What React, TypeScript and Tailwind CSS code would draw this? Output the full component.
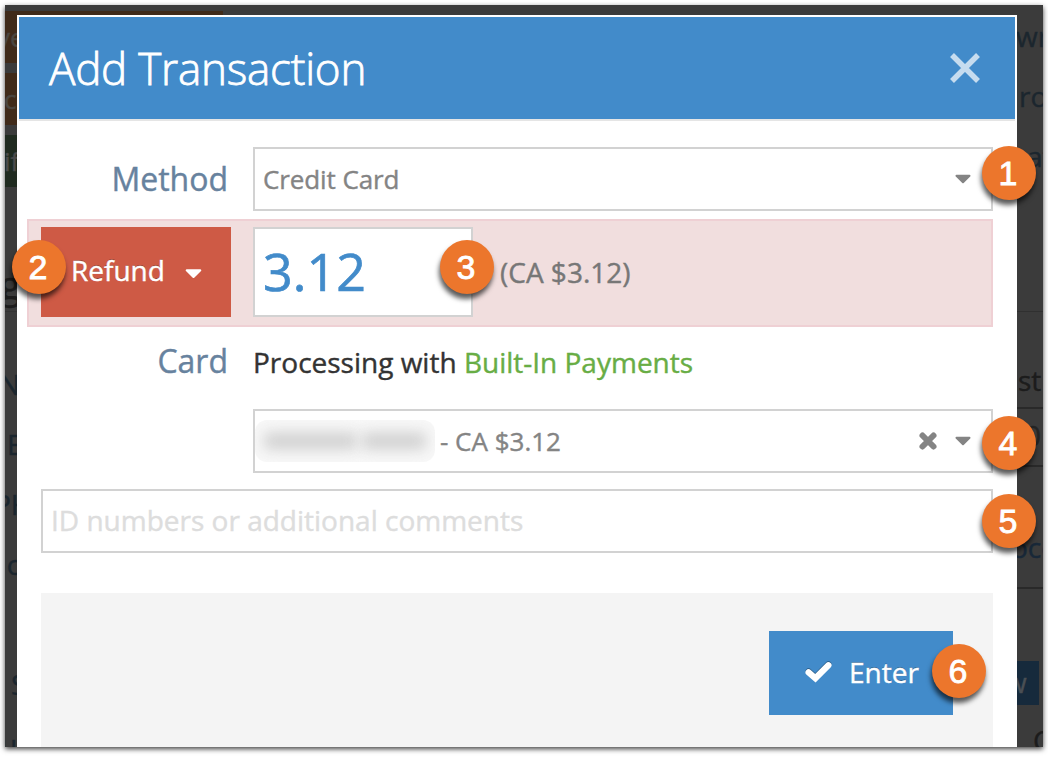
import React from 'react';
import { FaCaretDown } from 'react-icons/fa';

interface StepBadgeProps {
  step: number;
  className: string;
}

// Numbered callout pinned over the control it describes
function StepBadge({ step, className }: StepBadgeProps) {
  return (
    <span
      className={`absolute z-10 flex size-[54px] items-center justify-center rounded-full bg-[#ec762c] pr-[2px] pb-px font-['Liberation_Sans',sans-serif] text-[34px] leading-none text-white shadow-[-1px_5px_5px_rgba(0,0,0,0.65)] [-webkit-text-stroke:0.8px_white] [text-shadow:none] ${className}`}
    >
      {step}
    </span>
  );
}

function PageBehind() {
  return (
    <div className="flex justify-between overflow-hidden bg-[#3b3b3b] text-[28px] leading-[52px] whitespace-nowrap text-[#1b262e] [grid-area:1/1]">
      <div className="flex h-[742px] w-[218px] flex-col overflow-hidden pt-[6px]">
        <div className="h-[52px] shrink-0 bg-[#402b1a] text-[26px] text-[#4b4640]"><span className="-ml-[8px]">ve</span></div>
        <div className="mt-[10px] h-[52px] shrink-0 bg-[#402b1a] text-[26px] text-[#4b4640]"><span className="-ml-[1px]">ch</span></div>
        <div className="mt-[10px] h-[52px] shrink-0 bg-[#202b20] text-[26px] text-[#4b4b4b]"><span className="-ml-[1px]">if</span></div>
        <div className="mt-[73px] h-[52px] shrink-0 border-b border-[#333333] text-[38px] leading-[48px] text-[#1c1c1c]"><span className="-ml-[5px]">g</span></div>
        <div className="mt-[46px] h-[60px] shrink-0"><span className="-ml-[6px]">N</span></div>
        <div className="h-[60px] shrink-0"><span className="ml-[2px]">E</span></div>
        <div className="h-[60px] shrink-0"><span className="-ml-[11px]">PH</span></div>
        <div className="h-[120px] shrink-0"><span className="-ml-[6px]">Ic</span></div>
        <div className="h-[60px] shrink-0"><span className="ml-[6px]">S</span></div>
        <div className="h-[60px] shrink-0"><span className="-ml-[5px]">u</span></div>
      </div>
      <div className="flex h-[742px] w-[26px] flex-col overflow-hidden pt-[5px]">
        <div className="h-[60px] shrink-0"><span className="-ml-[1px]">wn</span></div>
        <div className="h-[60px] shrink-0"><span className="ml-[2px]">ro</span></div>
        <div className="h-[182px] shrink-0 border-b border-[#303030]"><span className="ml-[10px]">at</span></div>
        <div className="h-[97px] shrink-0 border-b-2 border-[#292929] pt-[42px] text-[#1c1c1c]"><span className="ml-[1px]">st</span></div>
        <div className="h-[58px] shrink-0 border-b-2 border-[#292929] text-[#242424]"><span className="ml-[8px]">0</span></div>
        <div className="h-[122px] shrink-0 border-b-2 border-[#292929] pt-[54px] text-[#182838]"><span className="-ml-[6px]">oce</span></div>
        <div className="mt-[72px] h-[44px] w-[22px] shrink-0 bg-[#162a3c] leading-[42px] text-[#4a4f54]"><span className="-ml-[12px]">w</span></div>
        <div className="mt-[16px] flex h-[26px] shrink-0 overflow-hidden leading-[38px] text-[#1c1c1c]">
          <div className="w-[2px] bg-[#162a3c]" />
          <span className="ml-[16px]">C</span>
        </div>
      </div>
    </div>
  );
}

export default function App() {
  return (
    <div className="h-[757px] w-[1048px] overflow-hidden bg-white p-[5px] font-['Open_Sans',sans-serif] [-webkit-text-stroke:0.4px_currentColor]">
      <div className="grid h-[742px] w-[1038px] grid-cols-1 shadow-[0_2px_5px_rgba(0,0,0,0.75)]">
        <PageBehind />

        <div className="z-10 mt-[10px] ml-[12px] h-[732px] w-[1000px] bg-white [grid-area:1/1]">
          <div className="px-[2px] pt-[2px]">
            <div className="flex h-[104px] items-center justify-between border-b-2 border-[#e5e5e5] bg-[#428bca] pr-[34px] pl-[30px]">
              <h1 className="text-[44px] leading-none font-light tracking-[-0.25px] text-white [-webkit-text-stroke:0.8px_white]">Add Transaction</h1>
              <button aria-label="Close" className="text-[#c6dcef]">
                <svg className="size-[32px]" viewBox="0 0 32 32" stroke="currentColor" strokeWidth="5.5">
                  <path d="M3 3 29 29M29 3 3 29" />
                </svg>
              </button>
            </div>
          </div>

          <div className="mt-[26px] flex h-[64px] items-center pl-[24px]">
            <label className="w-[187px] text-right text-[32px] leading-none text-[#67829e]">Method</label>
            <div className="relative ml-[25px] flex h-[64px] w-[740px] items-center justify-between border-2 border-[#d2d2d2] pr-[15px] pl-[8px] text-[26px] tracking-[-0.1px] text-[#848484]">
              Credit Card
              <FaCaretDown className="mb-[2px] size-[26px]" />
              <StepBadge step={1} className="-top-[3px] -right-[45px]" />
            </div>
          </div>

          <div className="mt-[8px] ml-[10px] flex h-[108px] w-[966px] items-start border-2 border-[#efd0d4] bg-[#f1dede] pt-[6px] pl-[12px]">
            <button className="relative flex h-[90px] w-[190px] items-center bg-[#ce5a45] pb-[4px] pl-[30px] text-[28px] text-white [text-shadow:0_-1px_0_rgba(0,0,0,0.3)]">
              Refund
              <FaCaretDown className="mt-[5px] ml-[15px] size-[27px]" />
              <StepBadge step={2} className="top-[13px] -left-[29px]" />
            </button>
            <div className="relative ml-[22px] flex h-[90px] w-[220px] items-center border-2 border-[#d2d2d2] bg-white pb-[2px] pl-[8px] text-[52px] text-[#428bca] [-webkit-text-stroke:0.7px_#428bca]">
              3.12
              <StepBadge step={3} className="top-[11px] -right-[23px]" />
            </div>
            <span className="ml-[27px] text-[28px] leading-[90px] text-[#777777]">(CA $3.12)</span>
          </div>

          <div className="mt-[8px] flex h-[74px] pl-[24px]">
            <label className="w-[187px] pt-[10px] text-right text-[32px] leading-none text-[#67829e]">Card</label>
            <p className="ml-[25px] pt-[8px] text-[28px] leading-[38px] text-[#333333]">
              Processing with <span className="text-[#68ad45]">Built-In Payments</span>
            </p>
          </div>

          <div className="relative ml-[236px] flex h-[64px] w-[740px] items-center border-2 border-[#d2d2d2] pr-[15px] text-[26px] text-[#848484]">
            <div className="flex h-[42px] w-[180px] items-center gap-[5px] overflow-hidden rounded-[12px] bg-[#f8f8f8] px-[9px]">
              <div className="h-[18px] w-[94px] rounded bg-[#d2d2d2] blur-[7px]" />
              <div className="h-[18px] w-[64px] rounded bg-[#d2d2d2] blur-[7px]" />
            </div>
            <span className="ml-[5px] grow">- CA $3.12</span>
            <svg className="size-[20px]" viewBox="0 0 20 20" stroke="currentColor" strokeWidth="6" strokeLinecap="round">
              <path d="M4.5 4.5 15.5 15.5M15.5 4.5 4.5 15.5" />
            </svg>
            <FaCaretDown className="mb-[2px] ml-[12px] size-[26px]" />
            <StepBadge step={4} className="top-[5px] -right-[45px]" />
          </div>

          <div className="relative mt-[16px] ml-[24px] flex h-[64px] w-[952px] items-center border-2 border-[#d2d2d2] pb-[2px] pl-[8px] text-[28px] text-[#dddddd]">
            ID numbers or additional comments
            <StepBadge step={5} className="top-[3px] -right-[45px]" />
          </div>

          <div className="mt-[40px] ml-[24px] flex h-[154px] w-[952px] justify-end bg-[#f4f4f4] pt-[38px] pr-[40px]">
            <button className="relative flex h-[84px] w-[184px] items-center bg-[#428bca] pb-[2px] pl-[36px] text-[28px] text-white [text-shadow:0_-1px_0_rgba(0,0,0,0.3)]">
              <svg className="mr-[17px] h-[22px] w-[27px] drop-shadow-[0_-1px_0_rgba(0,0,0,0.3)]" viewBox="0 0 27 22" fill="none" stroke="currentColor" strokeWidth="6.2" strokeLinecap="round">
                <path d="M3.6 11.4 10.4 17.3 23.4 4.2" />
              </svg>
              Enter
              <StepBadge step={6} className="top-[13px] -right-[33px]" />
            </button>
          </div>
        </div>
      </div>
    </div>
  );
}
